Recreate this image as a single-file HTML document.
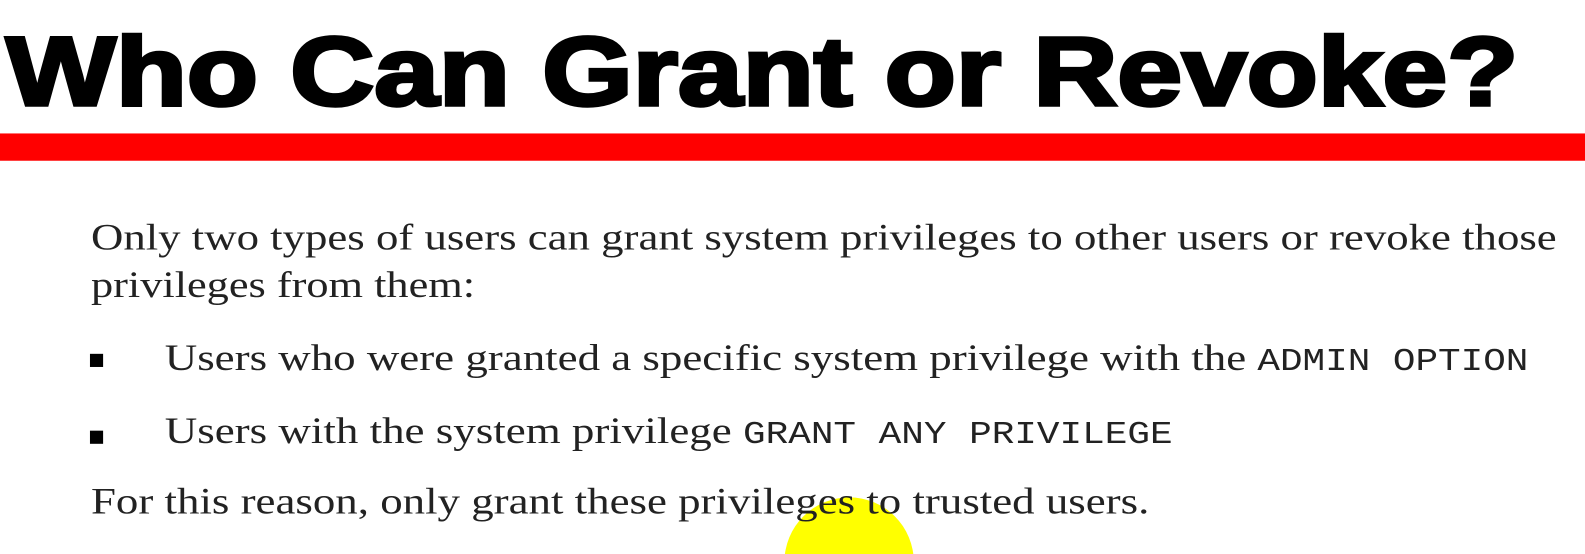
<!DOCTYPE html>
<html><head><meta charset="utf-8"><style>
html,body{margin:0;padding:0;background:#fff;width:1585px;height:554px;overflow:hidden}
svg{display:block}
</style></head><body>
<svg width="1585" height="554" viewBox="0 0 1568 548" preserveAspectRatio="none" xmlns="http://www.w3.org/2000/svg">
<rect width="1568" height="548" fill="#fff"/>
<circle cx="840" cy="556" r="64" fill="#ffff00"/>
<text x="6" y="104" font-family="Liberation Sans, Arial, sans-serif" font-weight="bold" font-size="96" fill="#000" stroke="#000" stroke-width="3.5" textLength="1496" lengthAdjust="spacingAndGlyphs">Who Can Grant or Revoke?</text>
<rect x="0" y="132" width="1568" height="27" fill="#ff0000"/>
<g font-family="Liberation Serif, serif" font-size="37" fill="#222">
<text x="90" y="247" textLength="1450" lengthAdjust="spacingAndGlyphs">Only two types of users can grant system privileges to other users or revoke those</text>
<text x="90" y="294" textLength="380" lengthAdjust="spacingAndGlyphs">privileges from them:</text>
<rect x="89" y="350" width="13" height="13" fill="#000"/>
<text x="163" y="366" textLength="1349" lengthAdjust="spacingAndGlyphs">Users who were granted a specific system privilege with the <tspan font-family="Liberation Mono, monospace" font-size="31">ADMIN OPTION</tspan></text>
<rect x="89" y="426" width="13" height="13" fill="#000"/>
<text x="163" y="438" textLength="997" lengthAdjust="spacingAndGlyphs">Users with the system privilege <tspan font-family="Liberation Mono, monospace" font-size="31">GRANT ANY PRIVILEGE</tspan></text>
<text x="90" y="508" textLength="1047" lengthAdjust="spacingAndGlyphs">For this reason, only grant these privileges to trusted users.</text>
</g>
</svg>
</body></html>
